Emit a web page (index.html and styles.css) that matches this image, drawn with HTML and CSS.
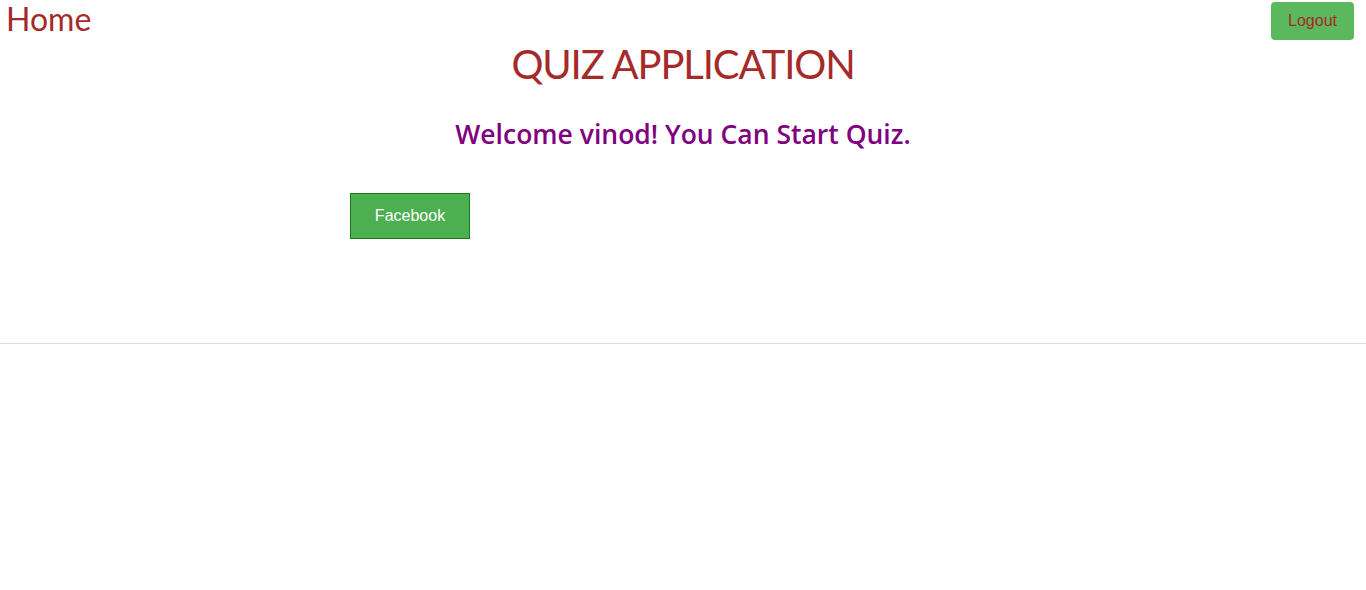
FILE: index.html
```html
<!DOCTYPE html>
<html>
<head>
<meta charset="utf-8">
<link rel="stylesheet" href="styles.css">
</head>
<body>
<header class="topbar">
  <a class="home" href="#">Home</a>
  <button class="logout">Logout</button>
</header>
<main class="content">
  <h1 class="title">QUIZ APPLICATION</h1>
  <h2 class="welcome">Welcome vinod! You Can Start Quiz.</h2>
  <div class="actions">
    <button class="fb">Facebook</button>
  </div>
</main>
<hr class="rule">
</body>
</html>
```
FILE: styles.css
```css
html, body { margin: 0; padding: 0; background: #fff; }
body { font-family: "Lato", "Open Sans", sans-serif; }
.topbar {
  display: flex;
  justify-content: space-between;
  align-items: flex-start;
  height: 40px;
  padding: 0 12px 0 6px;
}
.home {
  display: block;
  color: #a52a2a;
  text-decoration: none;
  font-family: "Lato", sans-serif;
  font-size: 32px;
  line-height: 38px;
}
.logout {
  margin-top: 2px;
  width: 83px;
  height: 38px;
  background: #5cb85c;
  border: none;
  border-radius: 4px;
  color: #a52a2a;
  font-family: "Liberation Sans", Arial, sans-serif;
  font-size: 16px;
}
.content { display: flex; flex-direction: column; }
.title {
  margin: 0;
  text-align: center;
  font-weight: normal;
  color: #a52a2a;
  font-size: 40px;
  letter-spacing: -1.1px;
  line-height: 48px;
}
.welcome {
  margin: 28px 0 0;
  text-align: center;
  color: #800080;
  font-family: "Open Sans", sans-serif;
  font-weight: 600;
  font-size: 26.5px;
  line-height: 36px;
}
.actions { padding: 41px 0 0 350px; height: 150px; }
.fb {
  width: 120px;
  height: 46px;
  background: #4caf50;
  border: 1px solid #1c7a1c;
  color: #fff;
  font-family: "Liberation Sans", Arial, sans-serif;
  font-size: 16px;
}
.rule {
  margin: 0;
  border: none;
  border-top: 1px solid #ddd;
}
```
